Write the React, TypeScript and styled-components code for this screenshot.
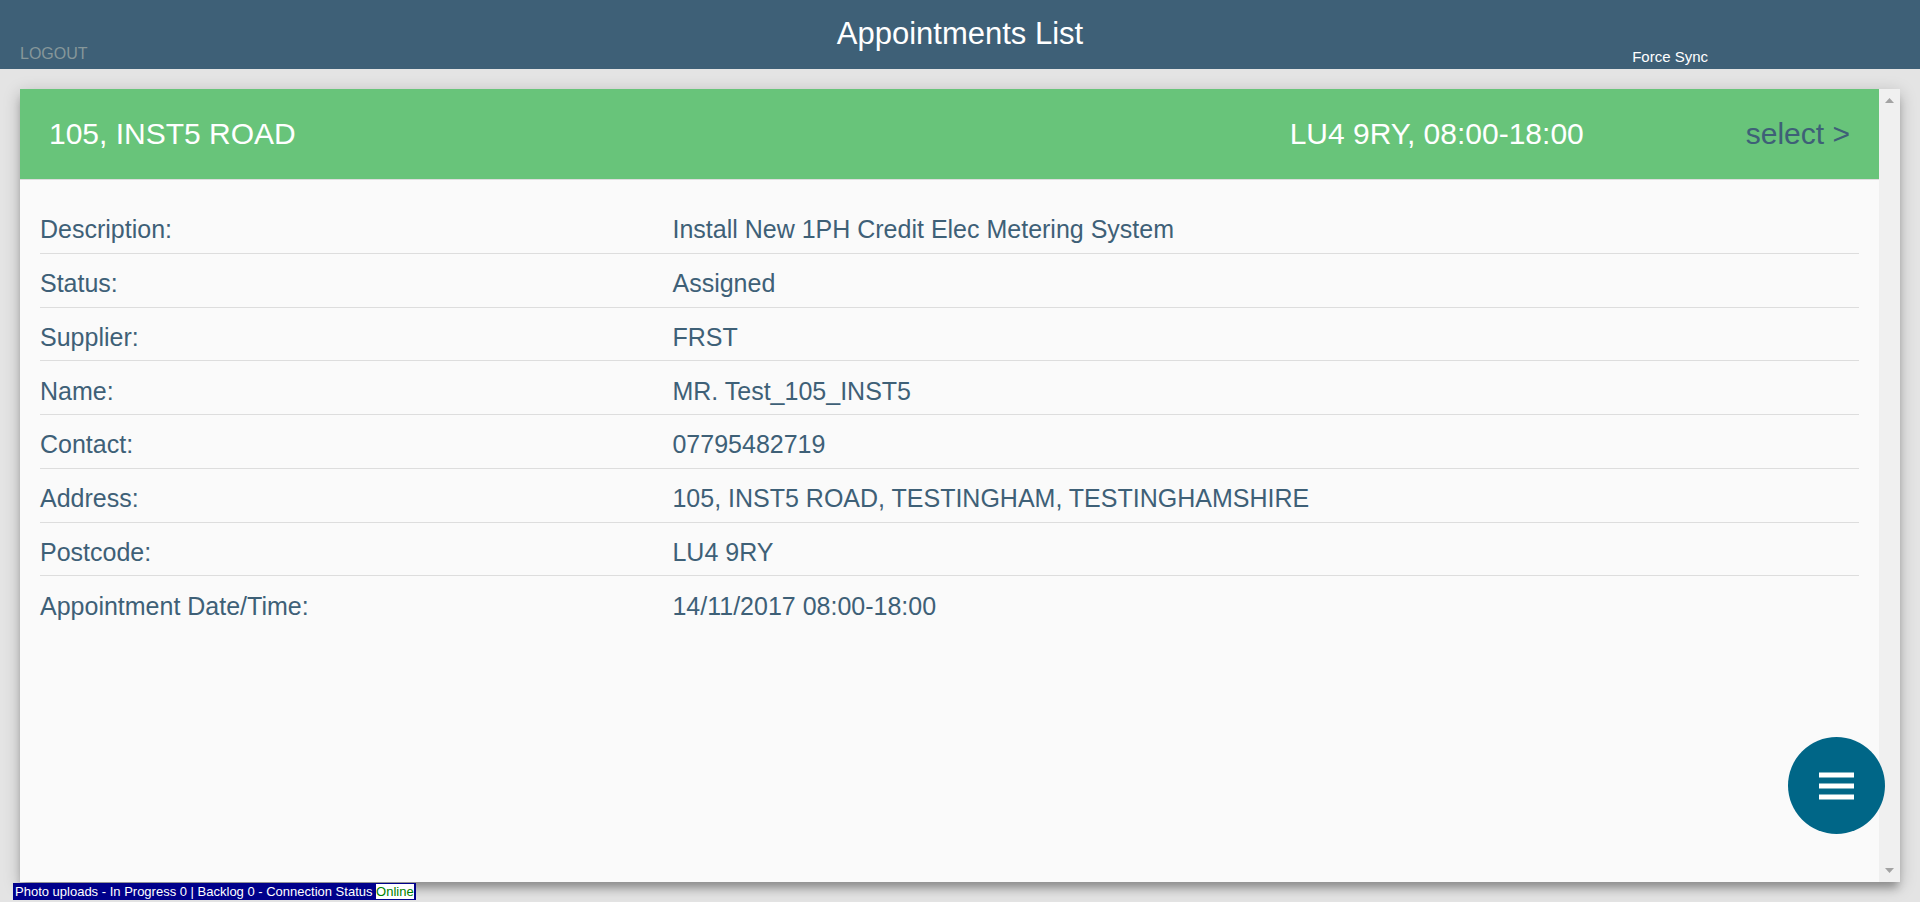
import React from "react";
import styled, { createGlobalStyle } from "styled-components";

const colors = {
  header: "#3e6077",
  page: "#e4e4e4",
  card: "#fafafa",
  green: "#68c47a",
  line: "#dddddd",
  text: "#3e6077",
};

const GlobalStyle = createGlobalStyle`
  *, *::before, *::after { box-sizing: border-box; }
  body {
    margin: 0;
    background: ${colors.page};
    font-family: "Liberation Sans", Arial, sans-serif;
  }
  button { font: inherit; border: 0; background: none; cursor: pointer; }
`;

const Page = styled.div`
  display: flex;
  flex-direction: column;
  min-height: 100vh;
`;

const Header = styled.header`
  display: grid;
  grid-template-columns: 1fr auto 1fr;
  align-items: end;
  height: 69px;
  background: ${colors.header};
`;

const Title = styled.h1`
  align-self: start;
  margin: 0;
  padding-top: 14px;
  color: #fff;
  font-size: 31px;
  font-weight: 400;
  line-height: 40px;
`;

const LogoutButton = styled.button`
  && { font-size: 16px; }
  justify-self: start;
  margin-left: 20px;
  padding: 0 0 5px;
  color: #86979a;
  line-height: 20px;
`;

const SyncButton = styled.button`
  && { font-size: 15px; }
  justify-self: end;
  margin-right: 212px;
  padding: 0 0 2px;
  color: #fff;
  line-height: 20px;
`;

const Main = styled.main`
  display: flex;
  flex: 1;
  padding: 20px;
`;

const Card = styled.section`
  display: flex;
  flex: 1;
  background: ${colors.card};
  box-shadow:
    0 8px 8px -2px rgba(0, 0, 0, 0.26),
    0 4px 16px 0 rgba(0, 0, 0, 0.22);
`;

const CardContent = styled.div`
  flex: 1;
`;

const AppointmentBar = styled.div`
  display: flex;
  align-items: center;
  gap: 162px;
  height: 91px;
  padding: 0 29px;
  background: ${colors.green};
  border-bottom: 1px solid ${colors.line};
  color: #fff;
  font-size: 30px;
`;

const Place = styled.h2`
  flex: 1;
  margin: 0;
  font-size: inherit;
  font-weight: 400;
`;

const SelectLink = styled.a`
  color: ${colors.text};
  text-decoration: none;
`;

const Details = styled.div`
  padding: 20px;
`;

const DetailsTable = styled.table`
  width: 100%;
  height: 430px;
  border-collapse: separate;
  border-spacing: 0;
  table-layout: fixed;
  color: ${colors.text};
  font-size: 25px;
  line-height: 30px;
  text-align: left;

  th, td {
    padding: 13px 0 7px;
    border-bottom: 1px solid ${colors.line};
    font-weight: 400;
  }
  th { width: 34%; }
  td { padding-left: 14px; }
  tr:last-child > * { border-bottom-color: transparent; }
`;

const ScrollTrack = styled.div`
  display: flex;
  flex-direction: column;
  justify-content: space-between;
  align-items: center;
  width: 21px;
  padding: 9px 0;
  background: #f0f0f0;
`;

const ScrollArrow = styled.svg`
  display: block;
  width: 9px;
  height: 5px;
  fill: #a3a3a3;
`;

const MenuButton = styled.button`
  position: fixed;
  right: 35px;
  bottom: 68px;
  display: flex;
  align-items: center;
  justify-content: center;
  width: 97px;
  height: 97px;
  padding: 0;
  border-radius: 50%;
  && { background: #006687; }
`;

const StatusBar = styled.footer`
  position: fixed;
  left: 13px;
  bottom: 2px;
  padding: 1px 2px;
  background: #00008b;
  color: #fff;
  font-size: 13px;
  line-height: 15px;
  white-space: nowrap;
`;

const Online = styled.span`
  background: #fff;
  color: #008000;
`;

const details: [string, string][] = [
  ["Description:", "Install New 1PH Credit Elec Metering System"],
  ["Status:", "Assigned"],
  ["Supplier:", "FRST"],
  ["Name:", "MR. Test_105_INST5"],
  ["Contact:", "07795482719"],
  ["Address:", "105, INST5 ROAD, TESTINGHAM, TESTINGHAMSHIRE"],
  ["Postcode:", "LU4 9RY"],
  ["Appointment Date/Time:", "14/11/2017 08:00-18:00"],
];

export default function App() {
  return (
    <Page>
      <GlobalStyle />
      <Header>
        <LogoutButton type="button">LOGOUT</LogoutButton>
        <Title>Appointments List</Title>
        <SyncButton type="button">Force Sync</SyncButton>
      </Header>
      <Main>
        <Card>
          <CardContent>
            <AppointmentBar>
              <Place>105, INST5 ROAD</Place>
              <span>LU4 9RY, 08:00-18:00</span>
              <SelectLink href="#select">select &gt;</SelectLink>
            </AppointmentBar>
            <Details>
              <DetailsTable>
                <tbody>
                  {details.map(([label, value]) => (
                    <tr key={label}>
                      <th scope="row">{label}</th>
                      <td>{value}</td>
                    </tr>
                  ))}
                </tbody>
              </DetailsTable>
            </Details>
          </CardContent>
          <ScrollTrack aria-hidden="true">
            <ScrollArrow viewBox="0 0 9 5"><path d="M0 5L4.5 0L9 5Z" /></ScrollArrow>
            <ScrollArrow viewBox="0 0 9 5"><path d="M0 0L4.5 5L9 0Z" /></ScrollArrow>
          </ScrollTrack>
        </Card>
      </Main>
      <MenuButton type="button" aria-label="Menu">
        <svg width="35" height="28" viewBox="0 0 35 28" fill="#fff">
          <path d="M0 .4h35v5H0zM0 11.4h35v5H0zM0 22.4h35v5H0z" />
        </svg>
      </MenuButton>
      <StatusBar>
        Photo uploads - In Progress 0 | Backlog 0 - Connection Status <Online>Online</Online>
      </StatusBar>
    </Page>
  );
}
